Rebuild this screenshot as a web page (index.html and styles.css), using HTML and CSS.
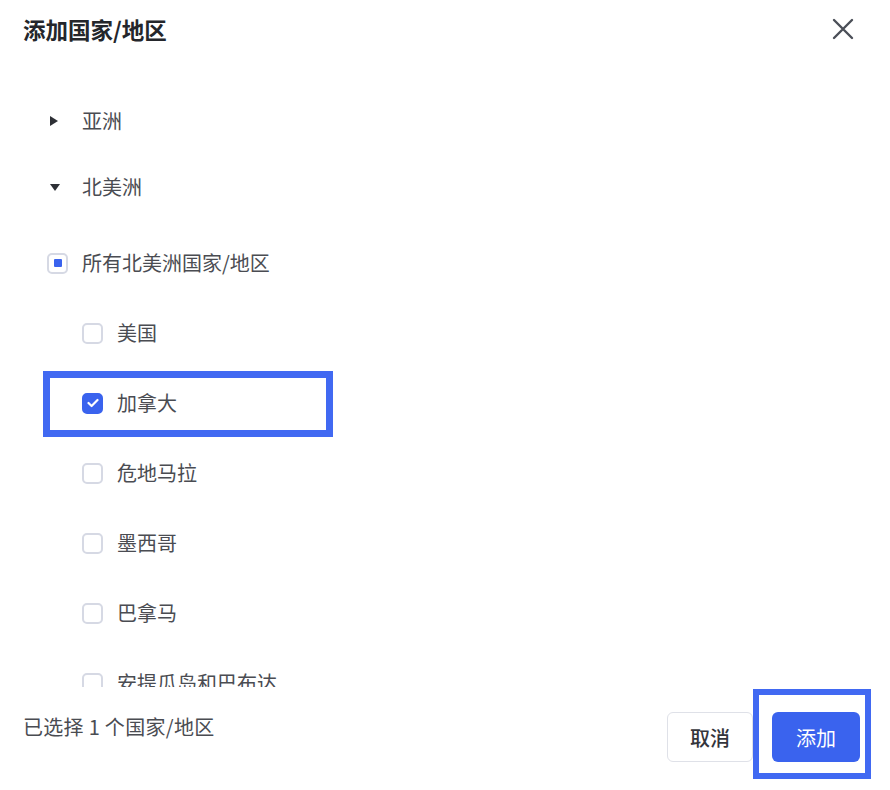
FILE: index.html
```html
<!DOCTYPE html>
<html lang="zh-CN">
<head>
  <meta charset="UTF-8">
  <title>添加国家/地区</title>
  <link rel="stylesheet" href="styles.css">
</head>
<body>
  <div class="dialog">

    <!-- Header -->
    <div class="header">
      <h1 class="title">添加国家/地区</h1>
      <button class="close" aria-label="关闭">
        <svg width="22" height="22" viewBox="0 0 22 22">
          <path d="M2 2 L20 20 M20 2 L2 20" stroke="#4b4f58" stroke-width="2.4" stroke-linecap="round" fill="none"/>
        </svg>
      </button>
    </div>

    <!-- Region list -->
    <div class="list">
      <div class="tree-row">
        <span class="caret caret-right"></span>
        <span class="label">亚洲</span>
      </div>
      <div class="tree-row">
        <span class="caret caret-down"></span>
        <span class="label">北美洲</span>
      </div>

      <div class="check-row parent">
        <span class="box partial"></span>
        <span class="label">所有北美洲国家/地区</span>
      </div>
      <div class="check-row">
        <span class="box"></span>
        <span class="label">美国</span>
      </div>
      <div class="check-row marked">
        <span class="box checked">
          <svg width="12" height="10" viewBox="0 0 12 10">
            <path d="M1.5 5 L4.6 8 L10.5 2" stroke="#fff" stroke-width="2.2" stroke-linecap="round" stroke-linejoin="round" fill="none"/>
          </svg>
        </span>
        <span class="label">加拿大</span>
      </div>
      <div class="check-row">
        <span class="box"></span>
        <span class="label">危地马拉</span>
      </div>
      <div class="check-row">
        <span class="box"></span>
        <span class="label">墨西哥</span>
      </div>
      <div class="check-row">
        <span class="box"></span>
        <span class="label">巴拿马</span>
      </div>
      <div class="check-row">
        <span class="box"></span>
        <span class="label">安提瓜岛和巴布达</span>
      </div>
    </div>

    <!-- Footer -->
    <div class="footer">
      <span class="count">已选择 1 个国家/地区</span>
      <div class="actions">
        <button class="btn cancel">取消</button>
        <span class="btn-wrap marked-btn">
          <button class="btn primary">添加</button>
        </span>
      </div>
    </div>

  </div>
</body>
</html>
```

FILE: styles.css
```css
body {
  margin: 0;
  padding: 0;
  background-color: #ffffff;
  font-family: "Noto Sans CJK SC", "Noto Sans", sans-serif;
  color: #4a4c52;
}

.dialog {
  width: 890px;
  height: 790px;
  display: flex;
  flex-direction: column;
  overflow: hidden;
}

.header {
  height: 58px;
  padding: 0 36px 0 23px;
  display: flex;
  align-items: center;
  justify-content: space-between;
  flex: none;
}

.title {
  margin: 0;
  font-size: 22.5px;
  font-weight: 700;
  color: #24262b;
  line-height: 30px;
}

.close {
  border: none;
  background: none;
  padding: 0;
  width: 22px;
  height: 22px;
  cursor: pointer;
}

.list {
  height: 629px;
  flex: none;
  overflow: hidden;
  padding-top: 30px;
  box-sizing: border-box;
}

.tree-row {
  height: 66px;
  display: flex;
  align-items: center;
  padding-left: 50px;
}

.caret {
  width: 0;
  height: 0;
  margin-right: 22px;
}

.caret-right {
  border-top: 5px solid transparent;
  border-bottom: 5px solid transparent;
  border-left: 8px solid #2e3036;
  margin-right: 24px;
}

.caret-down {
  border-left: 5px solid transparent;
  border-right: 5px solid transparent;
  border-top: 7px solid #2e3036;
}

.label {
  font-size: 20px;
  line-height: 28px;
  color: #4a4c52;
}

.check-row {
  height: 70px;
  display: flex;
  align-items: center;
  padding-left: 82px;
  position: relative;
}

.check-row.parent {
  padding-left: 47px;
  margin-top: 8px;
}

.box {
  width: 21px;
  height: 21px;
  box-sizing: border-box;
  border: 2px solid #d6d9e4;
  border-radius: 5px;
  margin-right: 14px;
  display: flex;
  align-items: center;
  justify-content: center;
  flex: none;
}

.box.partial::before {
  content: "";
  width: 8px;
  height: 8px;
  background-color: #3a63ee;
  border-radius: 1px;
}

.box.checked {
  background-color: #3a63ee;
  border-color: #3a63ee;
}

/* annotation frame around the checked row */
.check-row.marked::after {
  content: "";
  position: absolute;
  left: 43px;
  top: 3px;
  width: 290px;
  height: 66px;
  box-sizing: border-box;
  border: 7px solid #4169f2;
}

.footer {
  flex: 1;
  display: flex;
  justify-content: space-between;
  align-items: flex-start;
  padding: 25px 30px 0 23px;
}

.count {
  font-size: 20px;
  line-height: 30px;
  letter-spacing: 0.3px;
  color: #4a4c52;
}

.actions {
  display: flex;
  gap: 19px;
}

.btn {
  height: 50px;
  font-family: inherit;
  font-size: 20px;
  border-radius: 6px;
  cursor: pointer;
}

.cancel {
  width: 86px;
  background-color: #ffffff;
  border: 1.5px solid #dfe1e8;
  color: #33353b;
  font-weight: 500;
}

.primary {
  width: 88px;
  background-color: #3a63ee;
  border: none;
  color: #ffffff;
}

.btn-wrap {
  position: relative;
  display: block;
}

.marked-btn::after {
  content: "";
  position: absolute;
  left: -19px;
  top: -23px;
  right: -11px;
  bottom: -17px;
  border: 6px solid #4169f2;
  pointer-events: none;
}
```
